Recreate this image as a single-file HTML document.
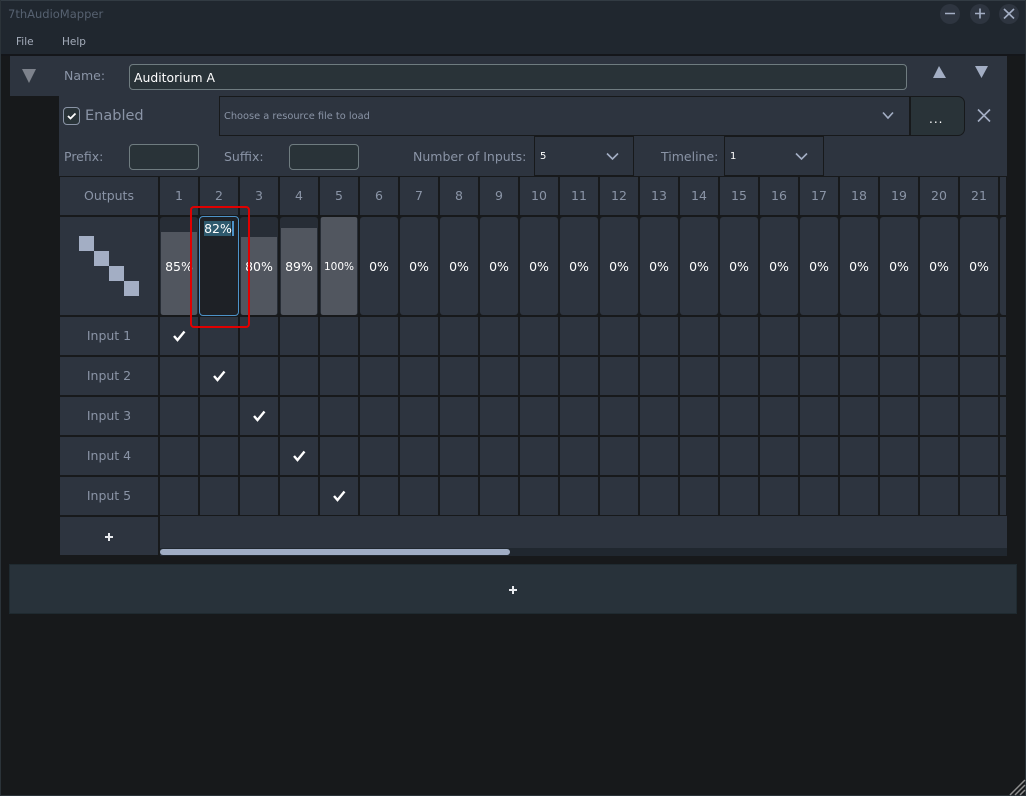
<!DOCTYPE html>
<html><head><meta charset="utf-8">
<style>
html,body{margin:0;padding:0;width:1026px;height:796px;overflow:hidden;background:#17191b}
body{font-family:"DejaVu Sans","Liberation Sans",sans-serif;position:relative}
div,span.a{position:absolute;box-sizing:border-box}
svg{position:absolute;overflow:visible}
.t{white-space:nowrap;color:#8a94a6;font-size:12.5px;line-height:16px}
.c{text-align:center}
.h{width:40px;text-align:center;top:188px;color:#8a94a6;font-size:12.5px;line-height:16px}
.p{width:40px;text-align:center;top:259px;color:#fff;font-size:12.5px;line-height:16px;white-space:nowrap}
.v{top:217px;width:38px;height:98px;background:#2d343f;border-radius:3px;overflow:hidden}
.d{background:#272d36}
.f{left:1px;right:1px;bottom:0;background:#51565f;border-radius:0 0 2px 2px}
.r{left:60px;width:98px;height:38px;background:#2d343f;color:#8a94a6;font-size:12.5px;line-height:38px;text-align:center}
.in{background:#293338;border:1px solid #6f7c80;border-radius:4px}
.dd{background:#2d343f;border:1px solid #17191b}
</style></head><body>
<div style="left:0;top:0;width:1026px;height:54px;background:#20272f;border-top:1px solid #323b43"></div>
<div style="left:0;top:54px;width:1026px;height:2px;background:#14161a"></div>
<div style="left:0;top:0;width:1px;height:796px;background:#2b3339"></div>
<div style="left:1025px;top:0;width:1px;height:796px;background:#2b3339"></div>
<div style="left:0;top:795px;width:1026px;height:1px;background:#2b3339"></div>
<div class="t" style="left:8px;top:6px;font-size:11.5px;color:#566170">7thAudioMapper</div>
<div class="t" style="left:16px;top:34px;font-size:10.5px;color:#a5adbb">File</div>
<div class="t" style="left:62px;top:34px;font-size:10.5px;color:#a5adbb">Help</div>
<div style="left:940px;top:4px;width:20px;height:20px;border-radius:10px;background:#2e3540"></div>
<div style="left:970px;top:4px;width:20px;height:20px;border-radius:10px;background:#2e3540"></div>
<div style="left:999px;top:4px;width:20px;height:20px;border-radius:10px;background:#2e3540"></div>
<svg style="left:0;top:0" width="1026" height="60"><g stroke="#a3aec4" stroke-width="1.6" fill="none"><path d="M945 13.5H955M975 13.5H985M980 8.5V18.5M1004 9L1014 18.5M1014 9L1004 18.5"/></g></svg>

<div style="left:10px;top:56px;width:997px;height:40px;background:#2d343f"></div>
<div style="left:59px;top:96px;width:948px;height:81px;background:#2d343f"></div>
<svg style="left:0;top:0" width="1026" height="130"><path d="M22 69H36L29 83Z" fill="#7d828c"/><path d="M933 78L939 66L946 78Z" fill="#a3aec4"/><path d="M975 66H988L981.500 78Z" fill="#a3aec4"/><path d="M978 109.500L990 121.500M990 109.500L978 121.500" stroke="#a3aec4" stroke-width="1.600" fill="none"/></svg>
<div class="t" style="left:64px;top:68px;font-size:12.500px">Name:</div>
<div class="in" style="left:129px;top:64px;width:778px;height:26px"></div>
<div class="t" style="left:134px;top:70px;color:#fff;font-size:12.400px">Auditorium A</div>

<div style="left:63px;top:107px;width:17px;height:18px;border:1px solid #8a94a6;border-radius:4px;background:#293338"></div>
<svg style="left:0;top:0" width="100" height="130"><path d="M68 116L70.500 118.500L75.500 113.500" stroke="#fff" stroke-width="1.800" fill="none"/></svg>
<div class="t" style="left:85px;top:108px;font-size:14.500px">Enabled</div>
<div style="left:219px;top:96px;width:691px;height:40px;background:#2d343f;border:1px solid #17191b"></div>
<div class="t" style="left:224px;top:109px;font-size:9.800px">Choose a resource file to load</div>
<div style="left:909px;top:96px;width:56px;height:40px;background:#293338;border:1px solid #17191b;border-left:2px solid #17191b;border-radius:0 7px 7px 0"></div>
<div class="t" style="left:929px;top:111px;color:#fff;font-size:12px;letter-spacing:1px">...</div>

<div class="t" style="left:64px;top:149px;font-size:12.500px">Prefix:</div>
<div class="in" style="left:129px;top:144px;width:70px;height:26px"></div>
<div class="t" style="left:224px;top:149px;font-size:12.500px">Suffix:</div>
<div class="in" style="left:289px;top:144px;width:70px;height:26px"></div>
<div class="t" style="left:413px;top:149px;font-size:12.500px">Number of Inputs:</div>
<div class="dd" style="left:534px;top:136px;width:100px;height:40px"></div>
<div class="t" style="left:540px;top:149px;color:#fff;font-size:10px">5</div>
<div class="t" style="left:661px;top:149px;font-size:12.500px">Timeline:</div>
<div class="dd" style="left:724px;top:136px;width:100px;height:40px"></div>
<div class="t" style="left:730px;top:149px;color:#fff;font-size:10px">1</div>
<svg style="left:0;top:0" width="1026" height="170"><g stroke="#a3aec4" stroke-width="1.600" fill="none"><path d="M883 112.500L888 118L893 112.500M607 153.500L612.500 159L618 153.500M796 153.500L801.500 159L807 153.500"/></g></svg>

<div style="left:59px;top:176px;width:948px;height:1px;background:#17191b"></div>
<div class="r" style="top:177px">Outputs</div>
<div style="left:60px;top:217px;width:98px;height:98px;background:#2d343f"></div>
<div style="left:79px;top:236px;width:15px;height:15px;background:#a3aec4"></div>
<div style="left:94px;top:251px;width:15px;height:15px;background:#a3aec4"></div>
<div style="left:109px;top:266px;width:15px;height:15px;background:#a3aec4"></div>
<div style="left:124px;top:281px;width:15px;height:15px;background:#a3aec4"></div>
<div class="r" style="top:317px">Input 1</div>
<div class="r" style="top:357px">Input 2</div>
<div class="r" style="top:397px">Input 3</div>
<div class="r" style="top:437px">Input 4</div>
<div class="r" style="top:477px">Input 5</div>
<div class="r" style="top:517px"></div>
<svg style="left:0;top:0" width="600" height="600"><path d="M105 537H113M109 533V541" stroke="#e8eaee" stroke-width="2" fill="none"/></svg>

<div style="left:160px;top:177px;width:846px;height:38px;background:repeating-linear-gradient(90deg,#2d343f 0 38px,#17191b 38px 40px)"></div>
<div style="left:160px;top:317px;width:846px;height:198px;background:repeating-linear-gradient(90deg,#2d343f 0 38px,#17191b 38px 40px)"></div>
<div style="left:160px;top:355px;width:846px;height:2px;background:#17191b"></div>
<div style="left:160px;top:395px;width:846px;height:2px;background:#17191b"></div>
<div style="left:160px;top:435px;width:846px;height:2px;background:#17191b"></div>
<div style="left:160px;top:475px;width:846px;height:2px;background:#17191b"></div>

<div class="v d" style="left:160px"><div class="f" style="height:83px"></div></div>
<div class="v d" style="left:240px"><div class="f" style="height:78px"></div></div>
<div class="v d" style="left:280px"><div class="f" style="height:87px"></div></div>
<div class="v d" style="left:320px"><div class="f" style="height:98px"></div></div>
<div class="v" style="left:360px"></div><div class="v" style="left:400px"></div><div class="v" style="left:440px"></div><div class="v" style="left:480px"></div><div class="v" style="left:520px"></div><div class="v" style="left:560px"></div><div class="v" style="left:600px"></div><div class="v" style="left:640px"></div><div class="v" style="left:680px"></div><div class="v" style="left:720px"></div><div class="v" style="left:760px"></div><div class="v" style="left:800px"></div><div class="v" style="left:840px"></div><div class="v" style="left:880px"></div><div class="v" style="left:920px"></div><div class="v" style="left:960px"></div>
<div class="v" style="left:1000px;width:6px;border-radius:3px 0 0 3px"></div>
<div style="left:199px;top:216px;width:40px;height:100px;background:#1e2126;border:1px solid #4d93c9;border-radius:4px"></div>

<div class="h" style="left:159px">1</div><div class="h" style="left:199px">2</div><div class="h" style="left:239px">3</div><div class="h" style="left:279px">4</div><div class="h" style="left:319px">5</div><div class="h" style="left:359px">6</div><div class="h" style="left:399px">7</div><div class="h" style="left:439px">8</div><div class="h" style="left:479px">9</div><div class="h" style="left:519px">10</div><div class="h" style="left:559px">11</div><div class="h" style="left:599px">12</div><div class="h" style="left:639px">13</div><div class="h" style="left:679px">14</div><div class="h" style="left:719px">15</div><div class="h" style="left:759px">16</div><div class="h" style="left:799px">17</div><div class="h" style="left:839px">18</div><div class="h" style="left:879px">19</div><div class="h" style="left:919px">20</div><div class="h" style="left:959px">21</div>

<div class="p" style="left:159px">85%</div>
<div style="left:204px;top:221px;width:27px;height:15px;background:#2e5a6e"></div>
<div style="left:232px;top:221px;width:2px;height:15px;background:#4d93c9"></div>
<div class="p" style="left:198px;top:221px;line-height:15px">82%</div>
<div class="p" style="left:239px">80%</div>
<div class="p" style="left:279px">89%</div>
<div class="p" style="left:319px;font-size:10.500px">100%</div>
<div class="p" style="left:359px">0%</div><div class="p" style="left:399px">0%</div><div class="p" style="left:439px">0%</div><div class="p" style="left:479px">0%</div><div class="p" style="left:519px">0%</div><div class="p" style="left:559px">0%</div><div class="p" style="left:599px">0%</div><div class="p" style="left:639px">0%</div><div class="p" style="left:679px">0%</div><div class="p" style="left:719px">0%</div><div class="p" style="left:759px">0%</div><div class="p" style="left:799px">0%</div><div class="p" style="left:839px">0%</div><div class="p" style="left:879px">0%</div><div class="p" style="left:919px">0%</div><div class="p" style="left:959px">0%</div>

<svg style="left:0;top:0" width="1026" height="520"><g stroke="#fff" stroke-width="2.400" fill="none"><path d="M174 336L177.500 340L184.500 331.500"/><path d="M214 376L217.500 380L224.500 371.500"/><path d="M254 416L257.500 420L264.500 411.500"/><path d="M294 456L297.500 460L304.500 451.500"/><path d="M334 496L337.500 500L344.500 491.500"/></g></svg>

<div style="left:159px;top:516px;width:848px;height:32px;background:#2d343f"></div>
<div style="left:159px;top:548px;width:848px;height:8px;background:#20272f"></div>
<div style="left:160px;top:549px;width:350px;height:6px;background:#a0adc4;border-radius:3px"></div>
<div style="left:158px;top:516px;width:2px;height:40px;background:#17191b"></div>

<div style="left:9px;top:564px;width:1008px;height:50px;background:#28323a;border:1px solid #1f2a30"></div>
<svg style="left:0;top:0" width="1026" height="620"><path d="M509 590H517M513 586V594" stroke="#e8eaee" stroke-width="2" fill="none"/></svg>

<div style="left:190px;top:206px;width:60px;height:122px;border:2px solid #e10000;border-radius:4px"></div>
<svg style="left:0;top:0" width="1026" height="796"><g stroke="#8e8e8e" stroke-width="1.500"><path d="M1025 780L1010 795M1025 785L1015 795M1025 790L1020 795"/></g></svg>
</body></html>
